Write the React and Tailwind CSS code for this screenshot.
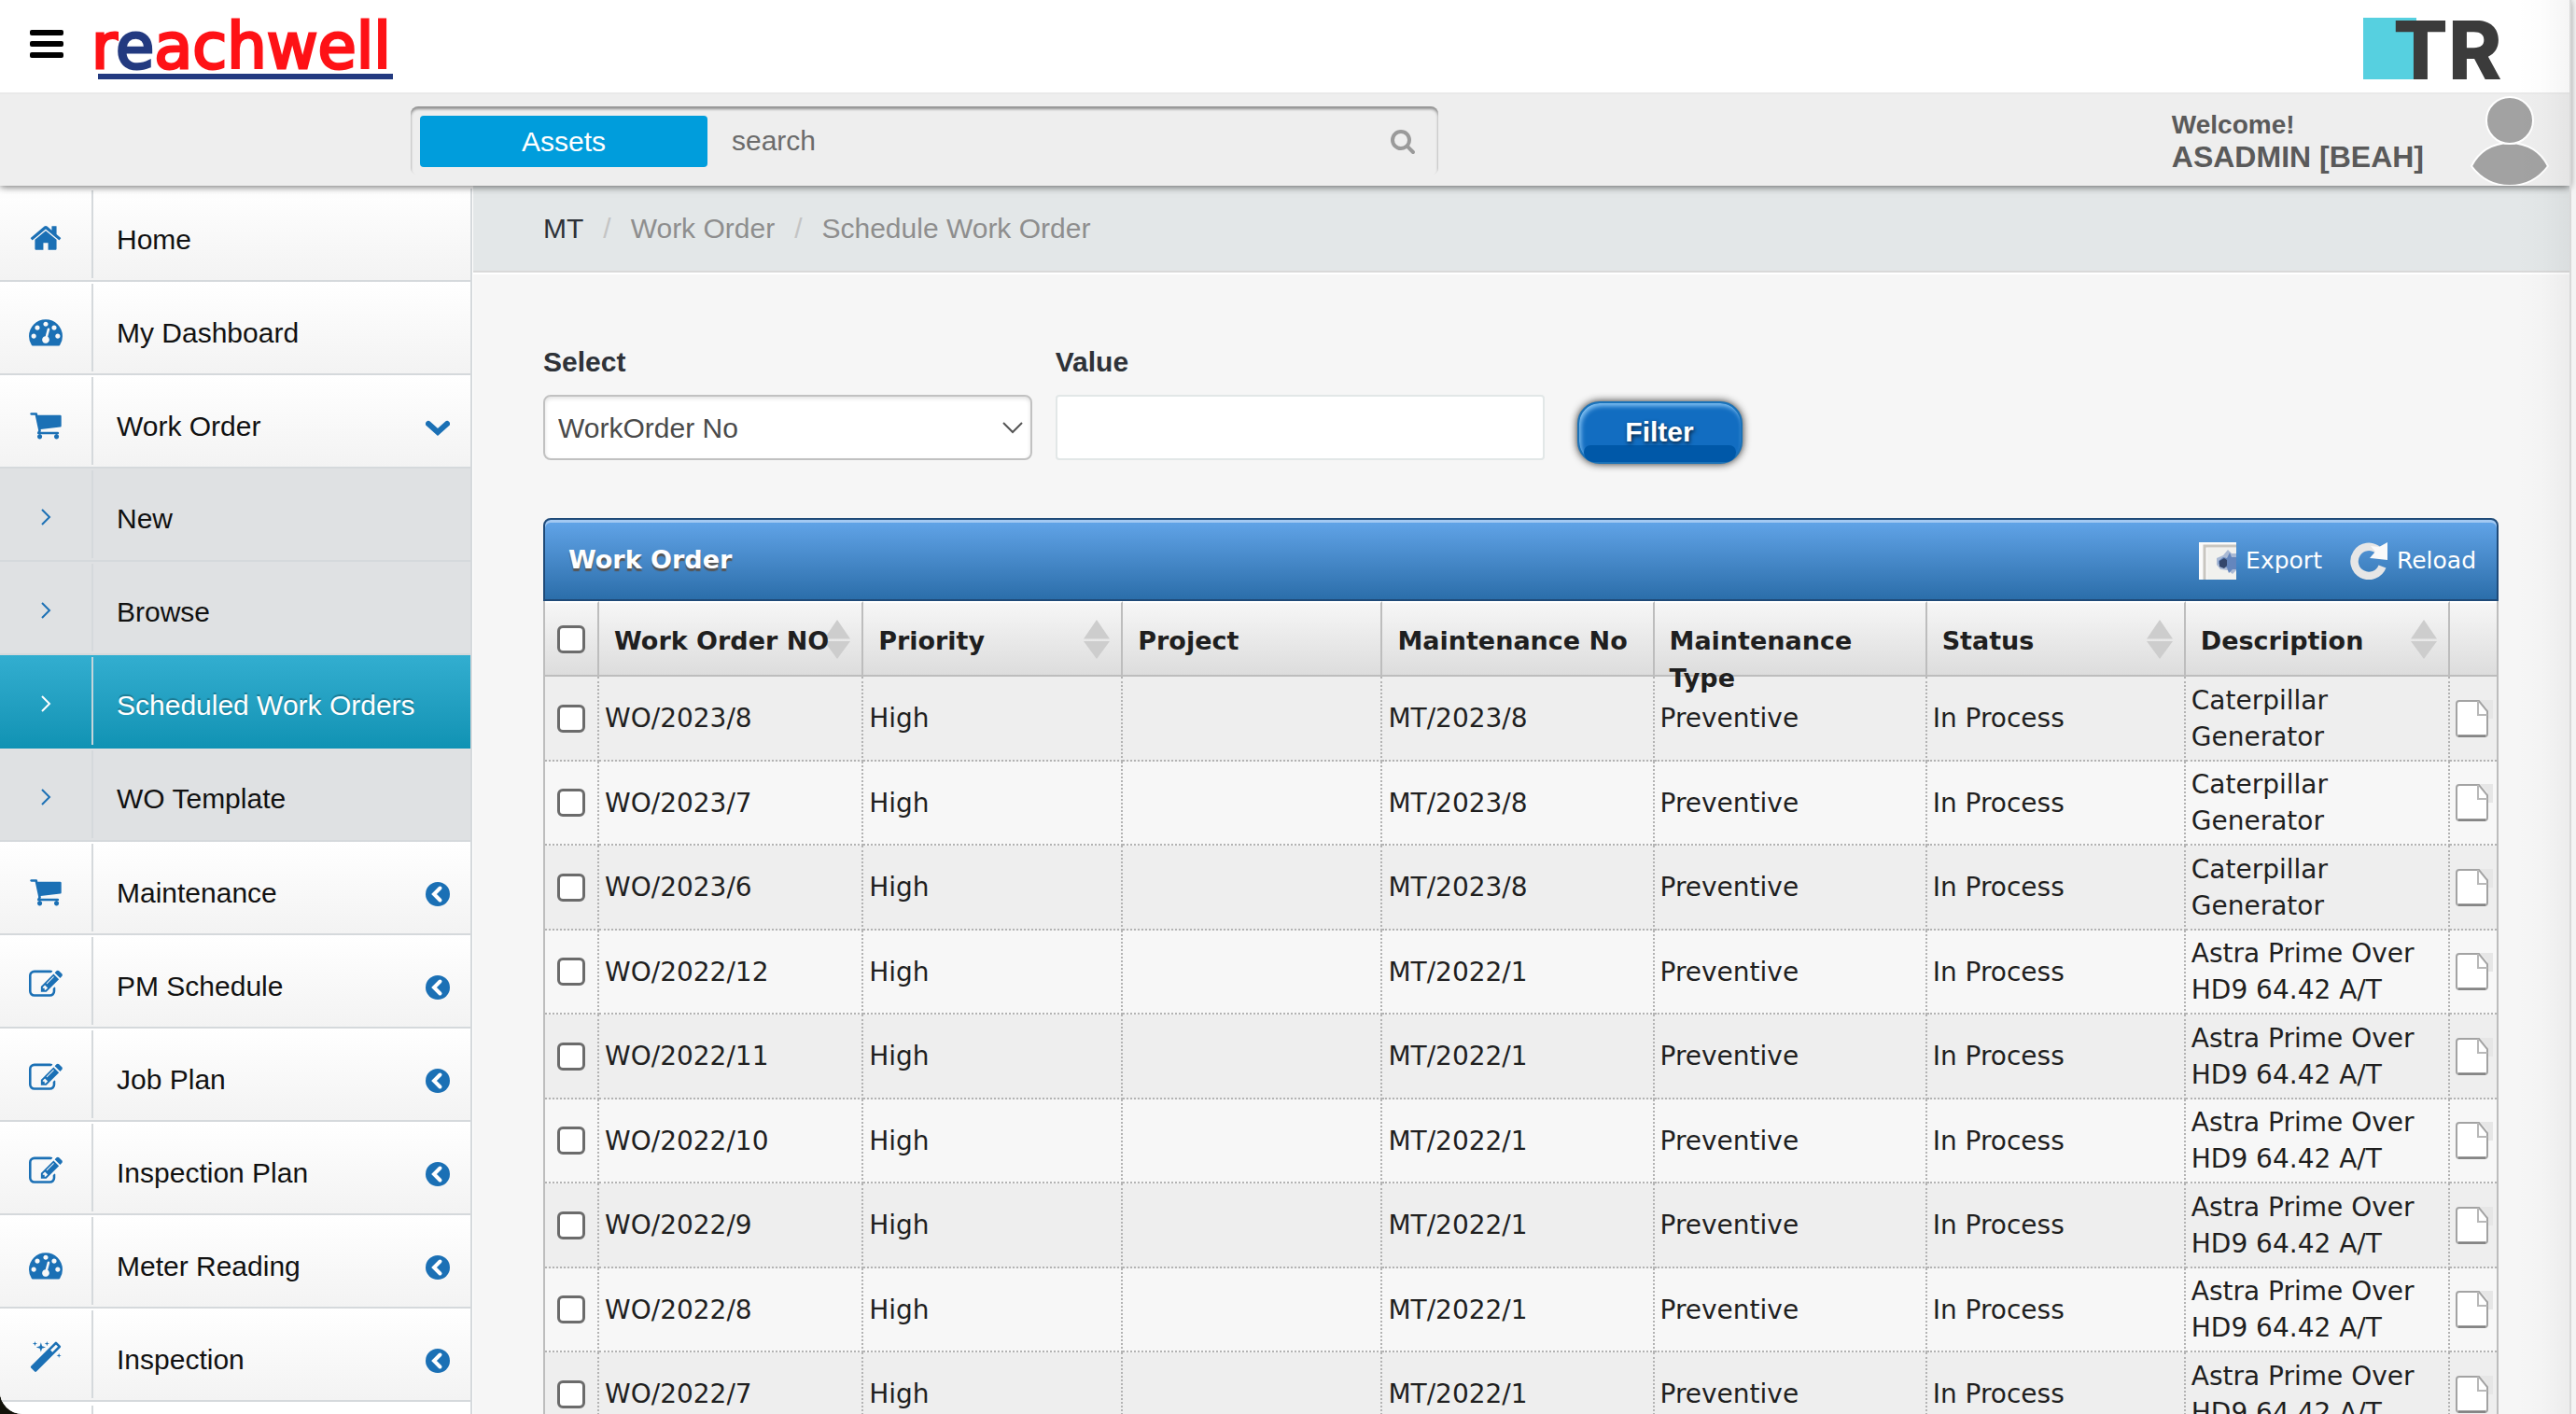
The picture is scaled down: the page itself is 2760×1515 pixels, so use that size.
import { useState } from "react";

const ICONS = {
  home: "M1472 992v480q0 26-19 45t-45 19h-384v-384h-256v384h-384q-26 0-45-19t-19-45v-480q0-1 .5-3t.5-3l575-474 575 474q1 2 1 6zm223-69l-62 74q-8 9-21 11h-3q-13 0-21-7l-692-577-692 577q-12 8-24 7-13-2-21-11l-62-74q-8-10-7-23.5t11-21.5l719-599q32-26 76-26t76 26l244 204v-195q0-14 9-23t23-9h192q14 0 23 9t9 23v408l219 182q10 8 11 21.5t-7 23.5z",
  dashboard:
    "M384 1152q0-53-37.5-90.5t-90.5-37.5-90.5 37.5-37.5 90.5 37.5 90.5 90.5 37.5 90.5-37.5 37.5-90.5zm192-448q0-53-37.5-90.5t-90.5-37.5-90.5 37.5-37.5 90.5 37.5 90.5 90.5 37.5 90.5-37.5 37.5-90.5zm428 481l101-382q6-26-7.5-48.5t-38.5-29.5-48 6.5-30 39.5l-101 382q-60 5-107 43.5t-63 98.5q-20 77 20 146t117 89 146-20 89-117q16-60-6-117t-72-91zm660-33q0-53-37.5-90.5t-90.5-37.5-90.5 37.5-37.5 90.5 37.5 90.5 90.5 37.5 90.5-37.5 37.5-90.5zm-640-640q0-53-37.5-90.5t-90.5-37.5-90.5 37.5-37.5 90.5 37.5 90.5 90.5 37.5 90.5-37.5 37.5-90.5zm448 192q0-53-37.5-90.5t-90.5-37.5-90.5 37.5-37.5 90.5 37.5 90.5 90.5 37.5 90.5-37.5 37.5-90.5zm320 448q0 261-141 483-19 29-54 29h-1402q-35 0-54-29-141-221-141-483 0-182 71-348t191-286 286-191 348-71 348 71 286 191 191 286 71 348z",
  cart: "M704 1536q0 52-38 90t-90 38-90-38-38-90 38-90 90-38 90 38 38 90zm896 0q0 52-38 90t-90 38-90-38-38-90 38-90 90-38 90 38 38 90zm128-1088v512q0 24-16.5 42.5t-40.5 21.5l-1044 122q13 60 13 70 0 16-24 64h920q26 0 45 19t19 45-19 45-45 19h-1024q-26 0-45-19t-19-45q0-11 8-31.5t16-36 21.5-40 15.5-29.5l-177-823h-204q-26 0-45-19t-19-45 19-45 45-19h256q16 0 28.5 6.5t19.5 15.5 13 24.5 8 26 5.5 29.5 4.5 26h1201q26 0 45 19t19 45z",
  edit: "M888 1184l116-116-152-152-116 116v56h96v96h56zm440-720q-16-16-33 1l-350 350q-17 17-1 33t33-1l350-350q17-17 1-33zm80 594v190q0 119-84.5 203.5t-203.5 84.5h-832q-119 0-203.5-84.5t-84.5-203.5v-832q0-119 84.5-203.5t203.5-84.5h832q63 0 117 25 15 7 18 23 3 17-9 29l-49 49q-14 14-32 8-23-6-45-6h-832q-66 0-113 47t-47 113v832q0 66 47 113t113 47h832q66 0 113-47t47-113v-126q0-13 9-22l64-64q15-15 35-7t20 29zm-96-738l288 288-672 672h-288v-288zm444 132l-92 92-288-288 92-92q28-28 68-28t68 28l152 152q28 28 28 68t-28 68z",
  magic:
    "M1254 581l293-293-107-107-293 293zm447-293q0 27-18 45l-1286 1286q-18 18-45 18t-45-18l-198-198q-18-18-18-45t18-45l1286-1286q18-18 45-18t45 18l198 198q18 18 18 45zm-1351-190l98 30-98 30-30 98-30-98-98-30 98-30 30-98zm350 162l196 60-196 60-60 196-60-196-196-60 196-60 60-196zm930 478l98 30-98 30-30 98-30-98-98-30 98-30 30-98zm-640-640l98 30-98 30-30 98-30-98-98-30 98-30 30-98z",
  search:
    "M1216 832q0-185-131.5-316.5t-316.5-131.5-316.5 131.5-131.5 316.5 131.5 316.5 316.5 131.5 316.5-131.5 131.5-316.5zm512 832q0 52-38 90t-90 38q-54 0-90-38l-343-342q-179 124-399 124-143 0-273.5-55.5t-225-150-150-225-55.5-273.5 55.5-273.5 150-225 225-150 273.5-55.5 273.5 55.5 225 150 150 225 55.5 273.5q0 220-124 399l343 343q37 37 37 90z",
};

const menu = [
  { label: "Home", icon: "home" },
  { label: "My Dashboard", icon: "dashboard" },
  {
    label: "Work Order",
    icon: "cart",
    children: ["New", "Browse", "Scheduled Work Orders", "WO Template"],
  },
  { label: "Maintenance", icon: "cart", closed: true },
  { label: "PM Schedule", icon: "edit", closed: true },
  { label: "Job Plan", icon: "edit", closed: true },
  { label: "Inspection Plan", icon: "edit", closed: true },
  { label: "Meter Reading", icon: "dashboard", closed: true },
  { label: "Inspection", icon: "magic", closed: true },
];

const columns = [
  { label: "Work Order NO", sortable: true },
  { label: "Priority", sortable: true },
  { label: "Project" },
  { label: "Maintenance No" },
  { label: "Maintenance Type" },
  { label: "Status", sortable: true },
  { label: "Description", sortable: true },
];

const caterpillar = "Caterpillar Generator";
const astra = "Astra Prime Over HD9 64.42 A/T";

const orders = [
  { no: "WO/2023/8", maintenance: "MT/2023/8", description: caterpillar },
  { no: "WO/2023/7", maintenance: "MT/2023/8", description: caterpillar },
  { no: "WO/2023/6", maintenance: "MT/2023/8", description: caterpillar },
  { no: "WO/2022/12", maintenance: "MT/2022/1", description: astra },
  { no: "WO/2022/11", maintenance: "MT/2022/1", description: astra },
  { no: "WO/2022/10", maintenance: "MT/2022/1", description: astra },
  { no: "WO/2022/9", maintenance: "MT/2022/1", description: astra },
  { no: "WO/2022/8", maintenance: "MT/2022/1", description: astra },
  { no: "WO/2022/7", maintenance: "MT/2022/1", description: astra },
];

function Icon({ name, className }) {
  return (
    <svg viewBox="0 0 1792 1792" fill="currentColor" className={className}>
      <path d={ICONS[name]} />
    </svg>
  );
}

function AngleRight() {
  return (
    <svg viewBox="0 0 12 20" fill="none" stroke="currentColor" strokeWidth="2" className="h-5 w-3">
      <path d="M2 2l8 8-8 8" />
    </svg>
  );
}

function ChevronDown() {
  return (
    <svg viewBox="0 0 26 26" fill="none" stroke="currentColor" strokeWidth="6" strokeLinecap="round" className="h-[26px] w-[26px]">
      <path d="M3 9l10 9 10-9" />
    </svg>
  );
}

function ChevronCircle() {
  return (
    <svg viewBox="0 0 26 26" className="h-[26px] w-[26px]">
      <circle cx="13" cy="13" r="13" fill="currentColor" />
      <path d="M15.5 6.5L9 13l6.5 6.5" fill="none" stroke="white" strokeWidth="4" strokeLinecap="round" />
    </svg>
  );
}

function SortArrows() {
  return (
    <svg viewBox="0 0 28 42" fill="#cdcdcd" className="absolute top-[18px] right-3 h-[42px] w-7">
      <path d="M14 0l14 20.500H0zM14 42L0 23h28z" />
    </svg>
  );
}

function PageIcon() {
  return (
    <svg viewBox="0 0 40 40" className="h-10 w-10">
      <path d="M26 0h14v20h-6V9z" fill="#e6e6e6" />
      <path d="M4 1h21l9 11v24a3 3 0 0 1-3 3H4a3 3 0 0 1-3-3V4a3 3 0 0 1 3-3z" fill="#fff" stroke="#a3a3a3" strokeWidth="2" />
      <path d="M24 1v15h10" fill="none" stroke="#b8b8b8" strokeWidth="2" />
      <path d="M3 38.500h29" stroke="#808080" strokeWidth="2.500" />
    </svg>
  );
}

function ExportIcon() {
  return (
    <svg viewBox="0 0 40 40" className="h-10 w-10">
      <path d="M0 0h40v40H0z" fill="#fbfbfb" />
      <path d="M6 40V4h34" fill="none" stroke="#c9c6c0" strokeWidth="3" />
      <path d="M9 6h31v34H9z" fill="#f1f1ee" />
      <path d="M19 17l7-3 5-6 4 4h5v18l-4 4-5-4-8-1-4-5z" fill="#a9b9d4" />
      <path d="M21 20l5-4 4 1 3-6 2 5h5v13h-4l-4 4-2-6-6-1-3-3z" fill="#6486bd" />
      <path d="M22 20l5-3 3 2v6l-3 3-5-2z" fill="#33466b" />
    </svg>
  );
}

function ReloadIcon() {
  return (
    <svg viewBox="0 0 40 40" className="h-10 w-10">
      <path d="M30 8.500A15.500 15.500 0 1 0 34.500 26" fill="none" stroke="#e6e6e6" strokeWidth="8.500" />
      <path d="M40 0v19l-19-2 6-7-5-6 9 1z" fill="#fafafa" />
    </svg>
  );
}

function Header() {
  return (
    <header className="relative z-10 shadow-[0_1px_8px_rgba(0,0,0,0.6)]">
      <div className="flex h-[99px] items-start bg-white pr-[63px] pl-8">
        <button type="button" aria-label="Toggle menu" className="mt-8 flex w-9 flex-col gap-1.5">
          <span className="h-1.5 rounded-xs bg-black" />
          <span className="h-1.5 rounded-xs bg-black" />
          <span className="h-1.5 rounded-xs bg-black" />
        </button>
        <a href="#home" aria-label="reachwell" className="ml-6">
          <svg viewBox="0 0 350 99" className="h-[99px] w-[350px] overflow-visible">
            <text x="6" y="73" fontFamily="'DejaVu Sans', Verdana, sans-serif" fontSize="67" fill="#fe1216" stroke="#fe1216" strokeWidth="3">
              r
              <tspan fill="#233a80" stroke="#233a80">e</tspan>
              achwell
            </text>
            <path d="M13 79h316v6H13z" fill="#233a80" />
          </svg>
        </a>
        <svg viewBox="0 0 160 99" className="ml-auto h-[99px] w-40 overflow-visible">
          <path d="M2 19h57v66H2z" fill="#56d0e0" />
          <text x="34" y="85" fontFamily="Inter, sans-serif" fontSize="87" fontWeight="800" fill="#3b3b3b">
            TR
          </text>
        </svg>
      </div>
      <div className="flex h-[100px] border-t-2 border-[#e9e9e9] bg-[#eee] pr-[18px]">
        <form className="mt-[13px] ml-[440px] flex h-[74px] w-[1101px] items-center rounded-lg pr-6 pl-2.5 shadow-[inset_0_3px_3px_rgba(0,0,0,0.4)]">
          <button type="button" className="h-[55px] w-[308px] rounded-sm bg-[#009ddc] text-[30px] text-white">
            Assets
          </button>
          <input
            type="search"
            aria-label="Search"
            placeholder="search"
            className="ml-[26px] h-[55px] flex-1 bg-transparent text-[30px] outline-none placeholder:text-[#6b6b6b]"
          />
          <button type="submit" aria-label="Search" className="text-[#9a9a9a]">
            <Icon name="search" className="h-7 w-7" />
          </button>
        </form>
        <div className="mt-[15px] ml-auto font-bold text-[#5a5a5a]">
          <p className="text-[28px] leading-[35px]">Welcome!</p>
          <p className="text-[32px] leading-[35px]">ASADMIN [BEAH]</p>
        </div>
        <svg viewBox="0 0 92 98" className="ml-[46px] h-[98px] w-[92px]">
          <g fill="#a2a2a2" stroke="#fff" strokeWidth="2">
            <path d="M5 77Q17 53 46 52q29 1 41 25Q71 98 46 98T5 77z" />
            <circle cx="46" cy="28" r="25" />
          </g>
        </svg>
      </div>
    </header>
  );
}

function SubItem({ label, active }) {
  return (
    <li
      className={
        active
          ? "border-b-2 border-[#0f93b5] bg-linear-to-b from-[#32aed0] to-[#1093b4] text-white [text-shadow:0_-2px_1px_rgba(0,0,0,0.25)]"
          : "border-b-2 border-[#d5d9dc] bg-[#dfe1e3]"
      }
    >
      <a href="#workorder" className="flex h-[98px] items-center text-[30px]">
        <span
          className={
            active
              ? "flex h-[94px] w-[100px] items-center justify-center border-r-2 border-[#c5d5da] pt-1.5"
              : "flex h-[94px] w-[100px] items-center justify-center border-r-2 border-[#d5d9dc] pt-1.5 text-[#1b70b5]"
          }
        >
          <AngleRight />
        </span>
        <span className="pt-2 pl-[25px]">{label}</span>
      </a>
    </li>
  );
}

function Sidebar() {
  return (
    <nav className="w-[507px] shrink-0 border-r border-white bg-white pt-[3px]">
      <ul className="border-r-2 border-[#d5d9dc] text-[#111]">
        {menu.map((item) => (
          <li key={item.label}>
            <a
              href="#menu"
              className="flex h-[100px] items-center border-b-2 border-[#d5d9dc] bg-linear-to-b from-white to-[#f3f3f3] text-[30px]"
            >
              <span className="flex h-[94px] w-[100px] items-center justify-center border-r-2 border-[#d5d9dc] pt-2 text-[#1b70b5]">
                <Icon name={item.icon} className="h-9 w-9" />
              </span>
              <span className="flex-1 pt-2.5 pl-[25px]">{item.label}</span>
              <span className="pt-3.5 pr-[22px] text-[#1b70b5]">
                {item.children && <ChevronDown />}
                {item.closed && <ChevronCircle />}
              </span>
            </a>
            {item.children && (
              <ul>
                {item.children.map((child) => (
                  <SubItem key={child} label={child} active={child === "Scheduled Work Orders"} />
                ))}
              </ul>
            )}
          </li>
        ))}
        <li className="h-[100px] pt-1">
          <span className="block h-[94px] w-[100px] border-r-2 border-[#d5d9dc]" />
        </li>
      </ul>
    </nav>
  );
}

function FilterForm() {
  const [value, setValue] = useState("");

  return (
    <form className="flex gap-[25px]" onSubmit={(e) => e.preventDefault()}>
      <div className="w-1/4">
        <label htmlFor="field" className="block text-[30px] leading-10 font-bold text-[#2e3238]">
          Select
        </label>
        <div className="relative mt-[15px]">
          <select
            id="field"
            className="h-[70px] w-full appearance-none rounded-lg border-2 border-[#c1c1c1] bg-white px-3.5 text-[30px] text-[#4a4a4a] shadow-[inset_0_2px_4px_rgba(0,0,0,0.12)]"
          >
            <option>WorkOrder No</option>
          </select>
          <svg viewBox="0 0 22 13" fill="none" stroke="#555" strokeWidth="2" className="pointer-events-none absolute top-[29px] right-2.5 h-[13px] w-[22px]">
            <path d="M1 1l10 10L21 1" />
          </svg>
        </div>
      </div>
      <div className="w-1/4">
        <label htmlFor="value" className="block text-[30px] leading-10 font-bold text-[#2e3238]">
          Value
        </label>
        <input
          id="value"
          type="text"
          value={value}
          onChange={(e) => setValue(e.target.value)}
          className="mt-[15px] h-[70px] w-full rounded-sm border-2 border-[#e2e7e7] bg-white px-3.5 text-[30px]"
        />
      </div>
      <button
        type="submit"
        className="relative mt-[62px] ml-2.5 h-[67px] w-[177px] rounded-3xl border-2 border-[#1a72b8] bg-[#126dc1] pb-0.5 text-[30px] font-bold text-white shadow-[0_0_8px_rgba(0,0,0,0.85),inset_2px_3px_5px_rgba(160,215,255,0.8)] [text-shadow:1px_2px_4px_rgba(0,0,0,0.7)]"
      >
        <span className="absolute inset-x-[5px] bottom-0 h-[18px] rounded-t-xl rounded-b-[18px] bg-[#0058a8]" />
        <span className="relative">Filter</span>
      </button>
    </form>
  );
}

function OrdersTable() {
  return (
    <section className="mt-[58px] font-['DejaVu_Sans',Verdana,sans-serif] text-[#1f1f1f]">
      <div className="flex h-[89px] items-center rounded-t-lg border-2 border-[#1f4a78] bg-linear-to-b from-[#62a5e9] to-[#2b6eaa] pt-0.5 pr-[22px] pl-[25px] text-white shadow-[inset_0_3px_0_#a3c9f2]">
        <h2 className="flex-1 text-[27px] font-bold [text-shadow:0_3px_1px_#555]">Work Order</h2>
        <div className="flex gap-[30px] text-[25px]">
          <button type="button" className="flex items-center gap-2.5">
            <ExportIcon />
            Export
          </button>
          <button type="button" className="flex items-center gap-2.5">
            <ReloadIcon />
            Reload
          </button>
        </div>
      </div>
      <table className="w-full table-fixed border-separate border-spacing-0 border-x-2 border-[#bdbdbd] text-left">
        <colgroup>
          <col className="w-[58px]" />
          <col className="w-[283px]" />
          <col className="w-[278px]" />
          <col className="w-[278px]" />
          <col className="w-[291px]" />
          <col className="w-[292px]" />
          <col className="w-[277px]" />
          <col className="w-[283px]" />
          <col className="w-[50px]" />
        </colgroup>
        <thead>
          <tr className="bg-linear-to-b from-[#f7f7f7] to-[#dcdcdc] [&>th]:border-t-2 [&>th]:border-r-2 [&>th]:border-b-2 [&>th]:border-t-white [&>th]:border-r-[#bdbdbd] [&>th]:border-b-[#bdbdbd] [&>th:last-child]:border-r-0">
            <th className="p-0">
              <input
                type="checkbox"
                aria-label="Select all"
                className="mx-auto block h-[30px] w-[30px] appearance-none rounded-md border-[3px] border-[#6b6b6b] bg-white"
              />
            </th>
            {columns.map((col) => (
              <th key={col.label} className="relative p-0 align-top text-[27px] leading-10 font-bold">
                {col.sortable && <SortArrows />}
                <div className="relative h-[77px] pt-[21px] pl-4">{col.label}</div>
              </th>
            ))}
            <th className="p-0" />
          </tr>
        </thead>
        <tbody className="text-[28px] leading-[39px]">
          {orders.map((order) => (
            <tr
              key={order.no}
              className="h-[91px] bg-[#f7f7f7] odd:bg-[#eee] even:h-[90px] [&>td]:border-r-2 [&>td]:border-b-2 [&>td]:border-dotted [&>td]:border-[#b3b3b3] [&>td]:p-0 [&>td]:pl-1.5 [&>td:first-child]:pl-0 [&>td:last-child]:border-r-0"
            >
              <td>
                <input
                  type="checkbox"
                  aria-label={order.no}
                  className="mx-auto block h-[30px] w-[30px] appearance-none rounded-md border-[3px] border-[#6b6b6b] bg-white"
                />
              </td>
              <td>{order.no}</td>
              <td>High</td>
              <td />
              <td>{order.maintenance}</td>
              <td>Preventive</td>
              <td>In Process</td>
              <td>{order.description}</td>
              <td>
                <button type="button" aria-label={`Open ${order.no}`} className="block">
                  <PageIcon />
                </button>
              </td>
            </tr>
          ))}
        </tbody>
      </table>
    </section>
  );
}

export default function App() {
  return (
    <div className="h-screen bg-[#12120a]">
      <div className="relative h-full overflow-hidden rounded-bl-3xl bg-[#f4f4f4] pr-[7px] font-['Liberation_Sans',Arial,sans-serif]">
        <Header />
        <div className="flex">
          <Sidebar />
          <main className="min-w-0 flex-1 bg-[#f6f6f6]">
            <nav aria-label="Breadcrumb" className="border-b-2 border-white">
              <ol className="flex h-[93px] items-center gap-[21px] border-b-2 border-[#d9d9d9] bg-[#e3e7e8] pl-[75px] text-[30px] text-[#8e8e8e]">
                <li className="text-[#2e3238]">
                  <a href="#mt">MT</a>
                </li>
                <li className="text-[#c4c4c4]">/</li>
                <li>
                  <a href="#workorder">Work Order</a>
                </li>
                <li className="text-[#c4c4c4]">/</li>
                <li>Schedule Work Order</li>
              </ol>
            </nav>
            <div className="pt-[74px] pr-[76px] pl-[75px]">
              <FilterForm />
              <OrdersTable />
            </div>
          </main>
        </div>
        {/* shade along the scroll edge */}
        <div className="pointer-events-none absolute inset-y-0 right-[5px] z-20 w-[60px] border-r-2 border-[#d9d9d9] bg-linear-to-r from-transparent via-black/1 to-black/4" />
      </div>
    </div>
  );
}
